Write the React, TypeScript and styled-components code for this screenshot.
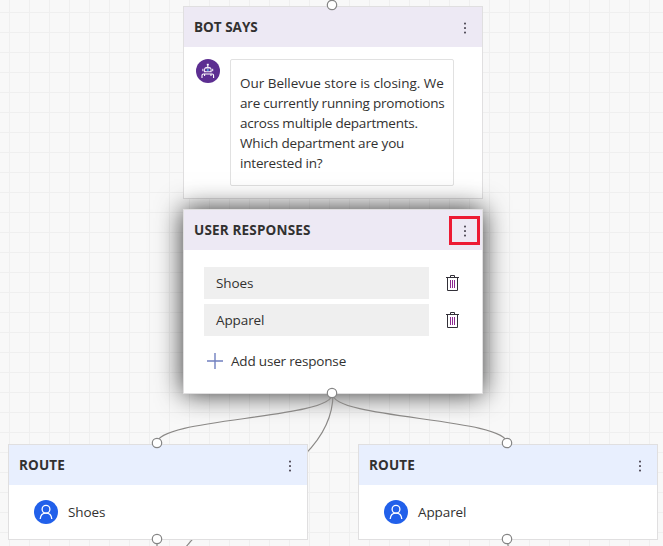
import React from "react";
import styled, { createGlobalStyle } from "styled-components";

const GlobalStyle = createGlobalStyle`
  * { box-sizing: border-box; }
  html, body { margin: 0; padding: 0; overflow: hidden; }
  body { font-family: "Open Sans", "Noto Sans", sans-serif; font-size: 13.5px; color: #323130; }
`;

const Canvas = styled.main`
  position: relative;
  width: 663px;
  height: 546px;
  overflow: hidden;
  background-color: #f8f8f8;
  background-image:
    linear-gradient(to right, #efefef 1px, transparent 1px),
    linear-gradient(to bottom, #efefef 1px, transparent 1px);
  background-size: 20px 20px;
  background-position: 9px 12px;
`;

const Overlay = styled.svg`
  position: absolute;
  inset: 0;
  pointer-events: none;
`;

const Node = styled.section<{ $x: number; $y: number; $h: number; $active?: boolean }>`
  position: absolute;
  left: ${(p) => p.$x}px;
  top: ${(p) => p.$y}px;
  width: 300px;
  height: ${(p) => p.$h}px;
  display: flex;
  flex-direction: column;
  background: #fff;
  border: 1px solid #e0dfe0;
  box-shadow: ${(p) => (p.$active ? "0 0 25px rgba(0, 0, 0, 0.8)" : "none")};
`;

const Header = styled.header<{ $tone: "purple" | "blue" }>`
  display: flex;
  align-items: center;
  justify-content: space-between;
  flex: 0 0 40px;
  padding: 0 2px 0 10px;
  background: ${(p) => (p.$tone === "purple" ? "#ede9f4" : "#e8effe")};
`;

const Title = styled.h2<{ $spacing: number }>`
  margin: 0;
  font-size: 13.5px;
  line-height: 20px;
  font-weight: 700;
  letter-spacing: ${(p) => p.$spacing}px;
`;

const MenuButton = styled.button<{ $marked?: boolean }>`
  width: 31px;
  height: 29px;
  padding: 1px 0 0 1px;
  display: flex;
  align-items: center;
  justify-content: center;
  background: none;
  border: ${(p) => (p.$marked ? "3px solid #ed1b34" : "3px solid transparent")};
  margin-top: 1px;
`;

const MessageRow = styled.div`
  display: flex;
  align-items: flex-start;
  gap: 10px;
  padding: 12px;
`;

const Bubble = styled.p`
  margin: 0;
  width: 224px;
  height: 127px;
  padding: 13px 0 0 9px;
  border: 1px solid #e1e1e1;
  border-radius: 2px;
  line-height: 20px;
`;

const Line = styled.span<{ $spacing: number }>`
  display: block;
  white-space: nowrap;
  letter-spacing: ${(p) => p.$spacing}px;
`;

const Responses = styled.div`
  display: flex;
  flex-direction: column;
  gap: 5px;
  padding: 17px 20px 0;
`;

const ResponseRow = styled.div`
  display: flex;
  align-items: center;
  gap: 17px;
`;

const ResponseField = styled.div`
  display: flex;
  align-items: center;
  width: 225px;
  height: 32px;
  padding-left: 12px;
  background: #efefef;
`;

const AddButton = styled.button`
  display: flex;
  align-items: center;
  gap: 8px;
  height: 20px;
  margin-top: 10px;
  padding: 0 0 0 3px;
  border: 0;
  background: none;
  font: inherit;
  color: inherit;
`;

const RouteRow = styled.div`
  display: flex;
  align-items: center;
  gap: 10px;
  padding: 15px 25px;
`;

const Dots = () => (
  <svg width="4" height="14" viewBox="0 0 4 14">
    {[2.5, 7, 11.5].map((y) => (
      <rect key={y} x="1" y={y - 0.8} width="2" height="1.7" fill="#55505c" />
    ))}
  </svg>
);

const BotIcon = () => (
  <svg width="24" height="24" viewBox="0 0 24 24">
    <circle cx="12" cy="12" r="12" fill="#5c2e91" />
    <rect x="10.8" y="4.8" width="2" height="1.6" fill="#fff" />
    <path d="M11.8 6v2" stroke="#fff" strokeWidth="1" />
    <path d="M7.9 13.2v-2a3.9 3.4 0 0 1 7.8 0v2z" fill="#f1eaf8" />
    <path d="M6.9 9.8v2.4M16.7 9.8v2.4" stroke="#fff" strokeWidth="1" />
    <rect x="8.9" y="9.6" width="5.8" height="2.6" rx="1.3" fill="#5c2e91" />
    <circle cx="11.8" cy="10.9" r="1" fill="#46b5e5" />
    <path d="M6 19v-2.6q0-1.4 1.4-1.4h8.8q1.4 0 1.4 1.4V19M8.6 15v2M15 15v2" fill="none" stroke="#fff" strokeWidth="1.1" />
  </svg>
);

const PersonIcon = () => (
  <svg width="24" height="24" viewBox="0 0 24 24">
    <circle cx="12" cy="12" r="12" fill="#2160ea" />
    <g fill="none" stroke="#fff" strokeWidth="1.3">
      <circle cx="12" cy="9.2" r="3.9" />
      <path d="M6.2 19c.3-3.4 2.6-5.9 5.8-5.9s5.5 2.5 5.8 5.9" />
    </g>
  </svg>
);

const TrashIcon = () => (
  <svg width="13" height="16" viewBox="0 0 13 16" fill="none">
    <path d="M0 2.5h13M1.5 2.5v13h10v-13M4.5 2.5v-2h4v2" stroke="#323038" />
    <path d="M4.5 5v8M6.5 5v8M8.5 5v8" stroke="#8c2a91" />
  </svg>
);

const PlusIcon = () => (
  <svg width="16" height="16" viewBox="0 0 16 16">
    <path d="M0 8h16M8 0v16" stroke="#7180c0" strokeWidth="1.4" />
  </svg>
);

const NodeHeader = ({ title, tone, spacing, marked }: {
  title: string; tone: "purple" | "blue"; spacing: number; marked?: boolean;
}) => (
  <Header $tone={tone}>
    <Title $spacing={spacing}>{title}</Title>
    <MenuButton $marked={marked} aria-label="More options"><Dots /></MenuButton>
  </Header>
);

const RouteNode = ({ x, label }: { x: number; label: string }) => (
  <Node $x={x} $y={444} $h={96}>
    <NodeHeader title="ROUTE" tone="blue" spacing={0.12} />
    <RouteRow><PersonIcon /><Line $spacing={-0.1}>{label}</Line></RouteRow>
  </Node>
);

const message: [string, number][] = [
  ["Our Bellevue store is closing. We", -0.02],
  ["are currently running promotions", -0.19],
  ["across multiple departments.", -0.23],
  ["Which department are you", -0.17],
  ["interested in?", -0.2],
];

const ports = [[332, 5], [332, 393], [157, 443], [507, 443], [157, 539], [507, 539]];

export default function App() {
  return (
    <>
      <GlobalStyle />
      <Canvas>
        <Node $x={183} $y={6} $h={193}>
          <NodeHeader title="BOT SAYS" tone="purple" spacing={0} />
          <MessageRow>
            <BotIcon />
            <Bubble>
              {message.map(([text, spacing]) => <Line key={text} $spacing={spacing}>{text}</Line>)}
            </Bubble>
          </MessageRow>
        </Node>
        <Node $x={183} $y={209} $h={185} $active>
          <NodeHeader title="USER RESPONSES" tone="purple" spacing={0.18} marked />
          <Responses>
            {["Shoes", "Apparel"].map((label) => (
              <ResponseRow key={label}>
                <ResponseField><Line $spacing={-0.1}>{label}</Line></ResponseField>
                <TrashIcon />
              </ResponseRow>
            ))}
            <AddButton><PlusIcon /><Line $spacing={-0.18}>Add user response</Line></AddButton>
          </Responses>
        </Node>
        <Overlay width="663" height="546" fill="none" stroke="#8a8886" strokeWidth="1.2">
          <path d="M332.5 394C332.5 419 157 418 157 443" />
          <path d="M332.5 394C332.5 419 507 418 507 443" />
          <path d="M333 394C333 470 220 500 186 547" />
          <path d="M157 539v12M507 539l2 12" />
        </Overlay>
        <RouteNode x={8} label="Shoes" />
        <RouteNode x={358} label="Apparel" />
        <Overlay width="663" height="546" fill="#fff" stroke="#858585" strokeWidth="1.2">
          {ports.map(([x, y]) => <circle key={`${x}-${y}`} cx={x} cy={y} r="4.7" />)}
        </Overlay>
      </Canvas>
    </>
  );
}
